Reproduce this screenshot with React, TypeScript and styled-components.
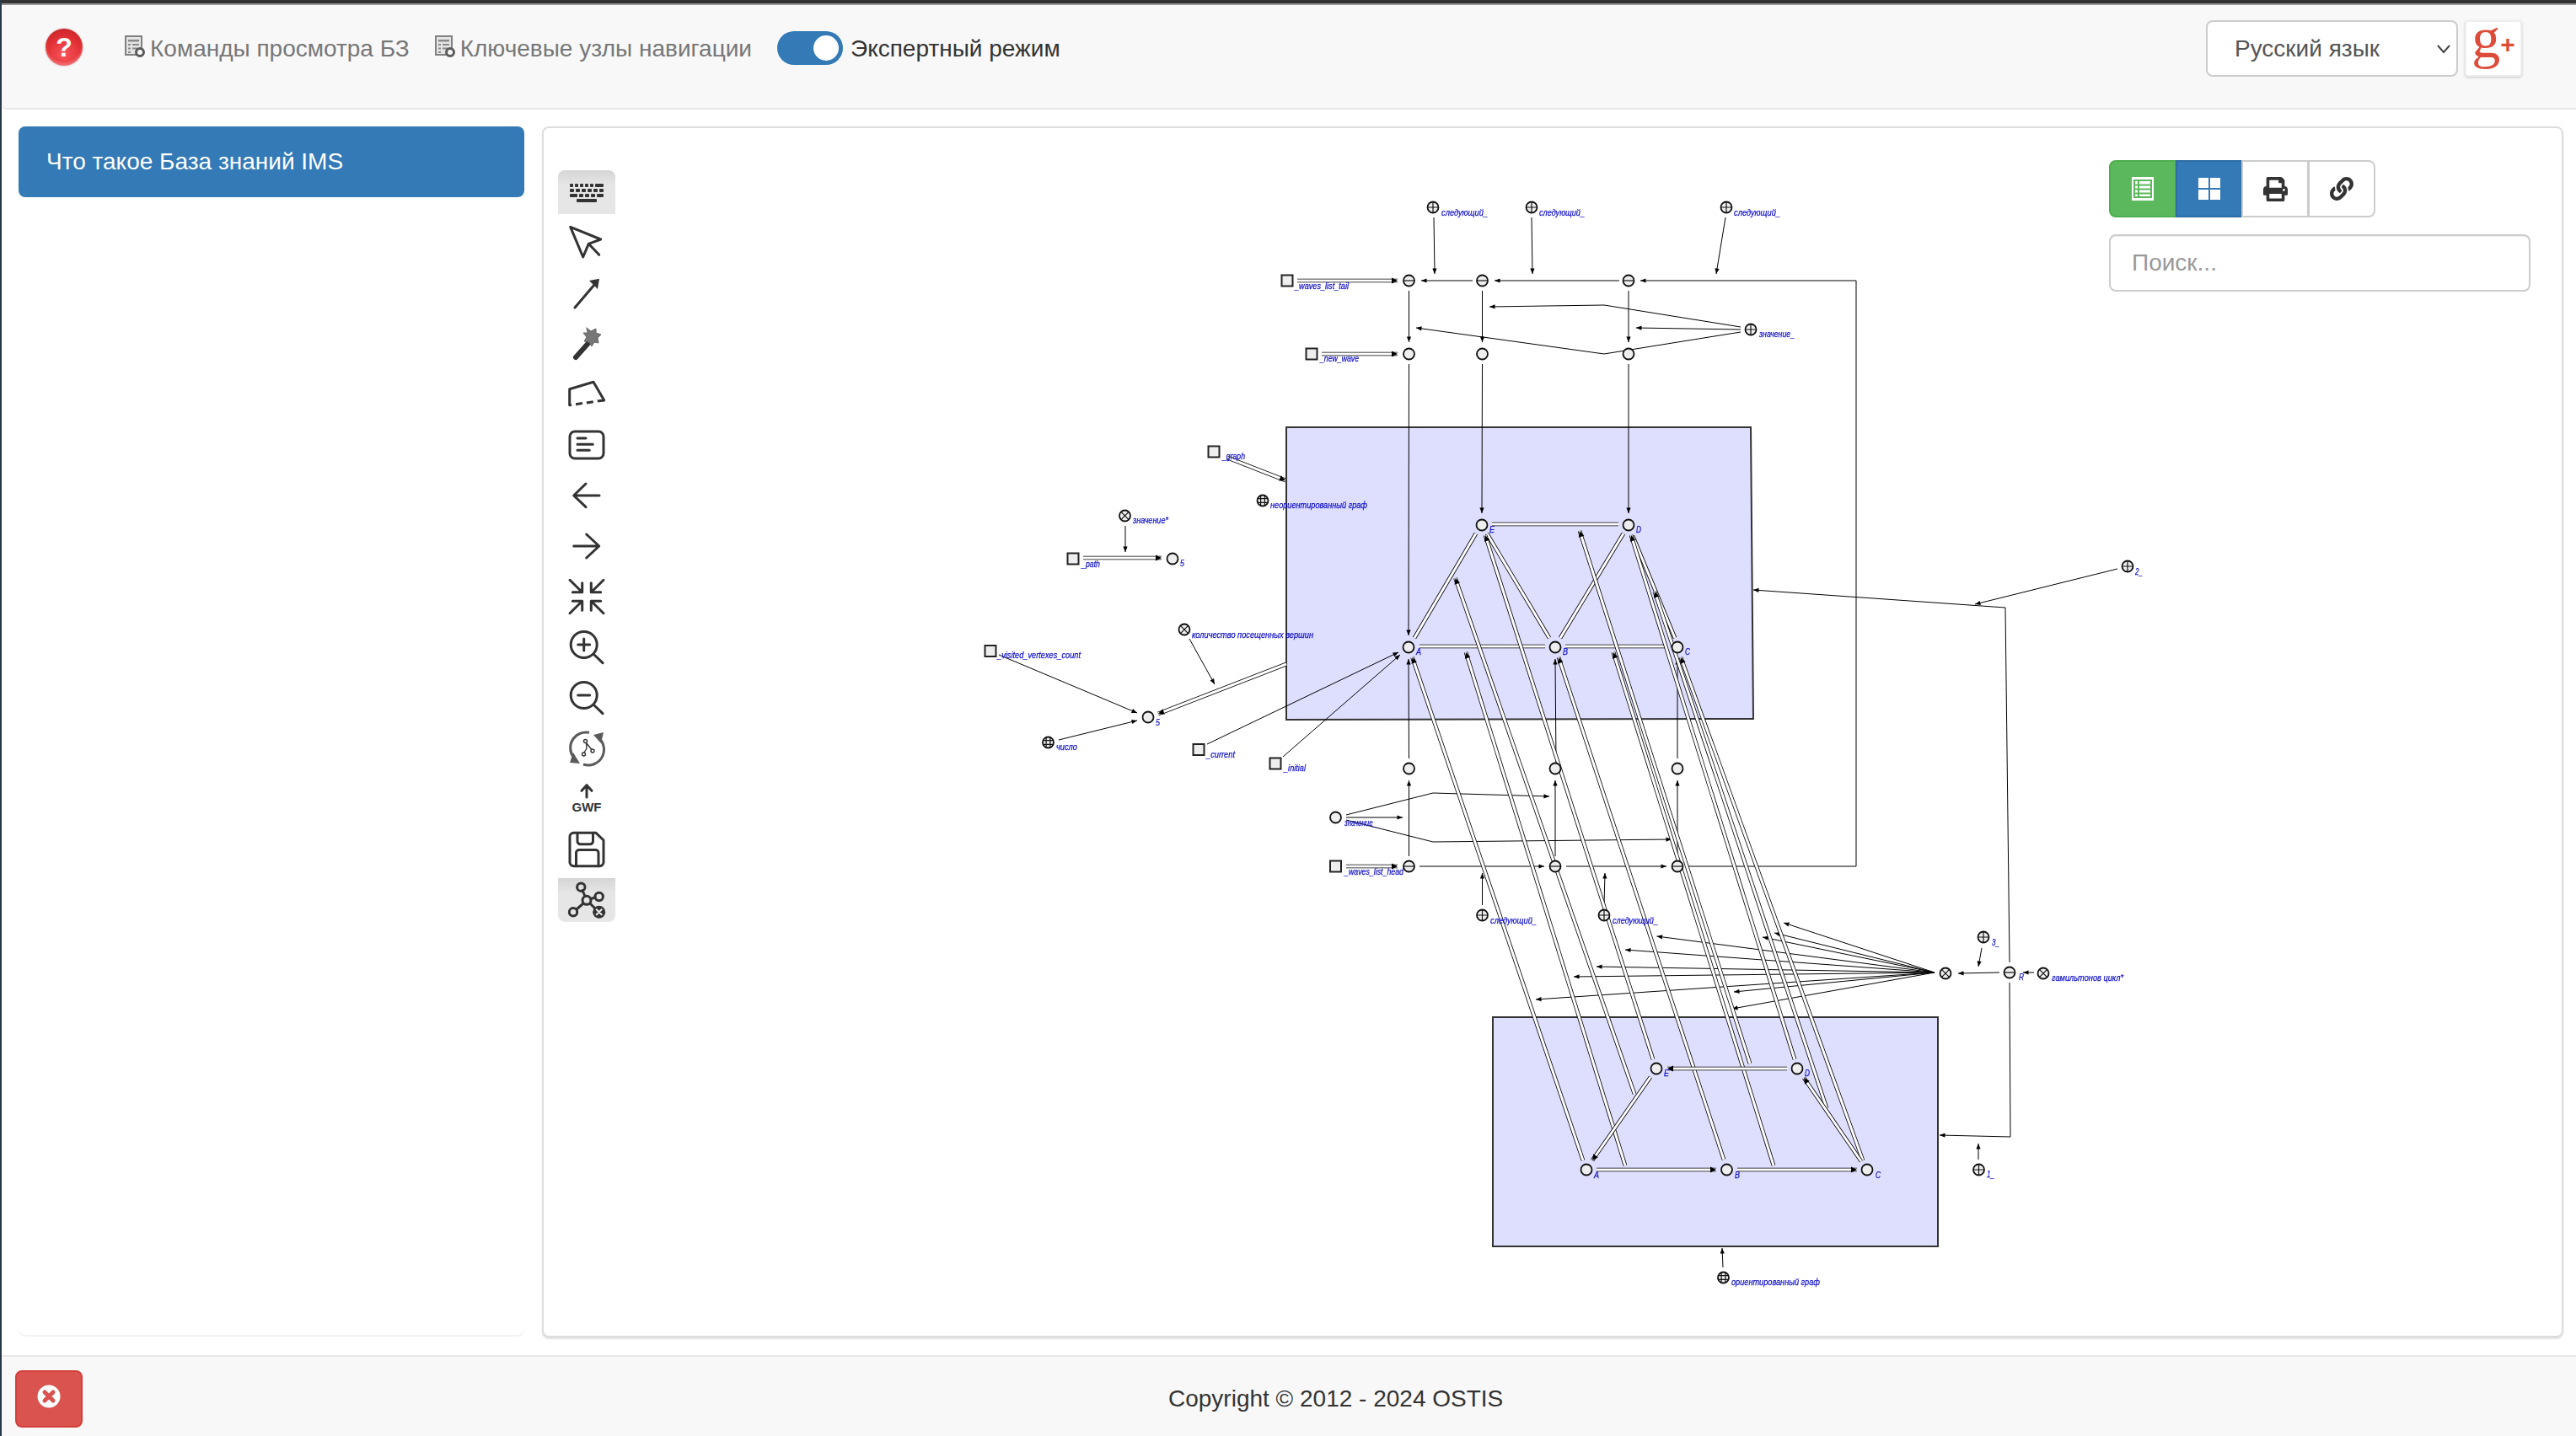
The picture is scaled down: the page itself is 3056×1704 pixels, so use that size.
import React from "react";
import styled, { createGlobalStyle } from "styled-components";
import { FaPrint, FaLink } from "react-icons/fa";

const Global = createGlobalStyle`
  html, body { margin: 0; padding: 0; background: #fff; }
  * { box-sizing: border-box; }
  body { font-family: "Liberation Sans", Arial, sans-serif; font-size: 28px; color: #333; }
`;

const Page = styled.div`
  width: 3056px; height: 1704px; display: flex; flex-direction: column;
  border-left: 2px solid #27384a; overflow: hidden;
`;
const TopStrip = styled.div`
  height: 6px; flex: none; background: #333; border-bottom: 2px solid #999;
`;
const Navbar = styled.nav`
  height: 124px; flex: none; display: flex; align-items: flex-start; padding: 18px 0 0 52px;
  background: #f8f8f8; border-bottom: 2px solid #e7e7e7; border-radius: 6px 0 0 6px;
`;
const NavRow = styled.div`
  height: 67px; flex: 1; display: flex; align-items: center;
`;
const Help = styled.div`
  width: 44px; height: 44px; border-radius: 50%; display: flex; align-items: center; justify-content: center;
  margin: -3px 50px 0 0; color: #fff; font-weight: 700; font-size: 32px; line-height: 1;
  background: radial-gradient(circle at 50% 70%, #f8555a 0%, #e23035 55%, #b81f22 100%);
  box-shadow: 0 0 2px rgba(120, 20, 20, .5), inset 0 -3px 3px rgba(255, 200, 200, .35);
`;
const NavLink = styled.a`
  display: flex; align-items: center; color: #777; margin-right: 30px; white-space: nowrap;
`;
const DocIcon = styled.svg`
  width: 24px; height: 26px; margin: -6px 6px 0 0; flex: none;
`;
const Toggle = styled.div`
  width: 78px; height: 40px; border-radius: 20px; background: #337ab7; display: flex; justify-content: flex-end;
  align-items: center; padding-right: 5px; margin: -1px 9px 0 0; flex: none;
`;
const Knob = styled.div`
  width: 30px; height: 30px; border-radius: 50%; background: #fff;
`;
const Expert = styled.span`
  color: #333; white-space: nowrap;
`;
const NavSpacer = styled.div`
  flex: 1;
`;
const SelectBox = styled.div`
  width: 299px; height: 67px; flex: none; background: #fff; border: 2px solid #ccc; border-radius: 8px; color: #555;
  display: flex; align-items: center; justify-content: space-between; padding: 0 6px 0 32px;
`;
const Chevron = styled.svg`
  width: 18px; height: 12px;
`;
const GooglePlus = styled.div`
  width: 68px; height: 67px; flex: none; margin: 0 64px 0 8px; background: #fff; border: 2px solid #eee; border-radius: 4px;
  box-shadow: 0 1px 3px rgba(0, 0, 0, .2); display: flex; align-items: center; justify-content: center; color: #dd4b39;
`;
const GLetter = styled.span`
  font-family: "Liberation Serif", serif; font-size: 68px; line-height: 50px; margin-top: -26px;
`;
const GPlus = styled.span`
  font-size: 30px; font-weight: 700; line-height: 1; margin: -10px 0 0 0;
`;

const Main = styled.main`
  flex: 1; display: flex; align-items: flex-start; padding: 20px 15px 0 20px; gap: 21px; min-height: 0;
`;
const Sidebar = styled.aside`
  width: 600px; height: 1434px; flex: none; border-radius: 8px; box-shadow: 0 2px 2px rgba(0, 0, 0, .06);
`;
const SidebarItem = styled.a`
  display: flex; align-items: center; height: 84px; padding: 0 33px; background: #337ab7; color: #fff; border-radius: 8px;
`;
const Panel = styled.section`
  width: 2398px; height: 1437px; flex: none; display: flex; background: #fff; border: 2px solid #ddd; border-radius: 8px;
  box-shadow: 0 2px 2px rgba(0, 0, 0, .12);
`;
const ToolColumn = styled.div`
  width: 68px; flex: none; margin: 50px 0 0 17px; display: flex; flex-direction: column; gap: 8px;
`;
const ToolButton = styled.div<{ $active?: "top" | "bottom" }>`
  width: 68px; height: 52px; display: flex; align-items: center; justify-content: center; color: #333;
  border-radius: ${p => (p.$active === "top" ? "8px 8px 0 0" : p.$active === "bottom" ? "0 0 8px 8px" : "0")};
  background: ${p => (p.$active ? "linear-gradient(#d5d5d5, #e6e6e6 35%)" : "transparent")};
`;
const ToolIcon = styled.svg`
  width: 44px; height: 44px; overflow: visible; flex: none;
  fill: none; stroke: #333; stroke-width: 3; stroke-linecap: round; stroke-linejoin: round;
`;
const GwfText = styled.text`
  font-family: "Liberation Sans", sans-serif; font-weight: 700; font-size: 15px; fill: #333; stroke: none; text-anchor: middle;
`;
const Canvas = styled.svg`
  width: 1772px; height: 1433px; flex: none; overflow: visible; filter: blur(.25px);
`;
const RightColumn = styled.div`
  width: 500px; flex: none; margin-top: 38px; display: flex; flex-direction: column; gap: 20px; position: relative;
`;
const ButtonGroup = styled.div`
  display: flex;
`;
const GroupButton = styled.div<{ $bg: string; $border: string; $w: number; $first?: boolean; $last?: boolean }>`
  width: ${p => p.$w}px; height: 68px; display: flex; align-items: center; justify-content: center;
  background: ${p => p.$bg}; border: 2px solid ${p => p.$border}; color: #333; margin-left: ${p => (p.$first ? 0 : -1)}px;
  border-radius: ${p => (p.$first ? "8px 0 0 8px" : p.$last ? "0 8px 8px 0" : "0")};
`;
const Search = styled.div`
  width: 500px; height: 68px; border: 2px solid #ccc; border-radius: 8px; color: #999; background: #fff;
  display: flex; align-items: center; padding-left: 25px; box-shadow: inset 0 1px 1px rgba(0, 0, 0, .075);
`;
const Footer = styled.footer`
  height: 96px; flex: none; display: flex; align-items: flex-start; padding: 16px 0 0 16px;
  background: #f8f8f8; border-top: 2px solid #e7e7e7;
`;
const CloseButton = styled.div`
  width: 80px; height: 68px; flex: none; display: flex; align-items: center; justify-content: center; padding-bottom: 6px;
  background: #d9534f; border: 2px solid #d43f3a; border-radius: 8px;
`;
const Copyright = styled.span`
  margin: 18px 0 0 1288px; color: #333; white-space: nowrap;
`;

/* graph parts */
const Contour = styled.polygon`
  fill: #dedeff; stroke: #333; stroke-width: 2;
`;
const Wire = styled.polyline<{ $w?: number; $c?: string }>`
  fill: none; stroke: ${p => p.$c || "#000"}; stroke-width: ${p => p.$w || 1}; stroke-linejoin: miter;
`;
const Head = styled.polygon`
  fill: #000;
`;
const NodeBody = styled.circle`
  fill: #eee; stroke: #111; stroke-width: 1.8;
`;
const NodeMark = styled.path`
  fill: none; stroke: #111; stroke-width: 1.2;
`;
const VarBody = styled.rect`
  fill: #eee; stroke: #222; stroke-width: 2;
`;
const Label = styled.text`
  font-family: "Liberation Sans", sans-serif; font-style: italic; font-size: 11px; fill: #1010c8;
  stroke: #1010c8; stroke-width: .25px;
`;

type P = [number, number];
type NodeKind = "plain" | "bar" | "plus" | "cross" | "grid";
const R = 6.5;

function ArrowHead({ a, b, len = 6.5, half = 2.6 }: { a: P; b: P; len?: number; half?: number }) {
  const dx = b[0] - a[0], dy = b[1] - a[1];
  const l = Math.hypot(dx, dy) || 1;
  const ux = dx / l, uy = dy / l;
  const bx = b[0] - ux * len, by = b[1] - uy * len;
  return <Head points={`${b[0]},${b[1]} ${bx - uy * half},${by + ux * half} ${bx + uy * half},${by - ux * half}`} />;
}

function Arc({ pts, head = true }: { pts: P[]; head?: boolean }) {
  return (
    <g>
      <Wire points={pts.map(p => p.join(",")).join(" ")} />
      {head && <ArrowHead a={pts[pts.length - 2]} b={pts[pts.length - 1]} />}
    </g>
  );
}

function DoubleArc({ a, b, head = true }: { a: P; b: P; head?: boolean }) {
  const pts = `${a[0]},${a[1]} ${b[0]},${b[1]}`;
  return (
    <g>
      <Wire points={pts} $w={4.6} />
      <Wire points={pts} $w={3} $c="#fff" />
      {head && <ArrowHead a={a} b={b} len={7} half={3.4} />}
    </g>
  );
}

function Node({ x, y, kind = "plain" }: { x: number; y: number; kind?: NodeKind }) {
  const r = R;
  let d = "";
  if (kind === "bar" || kind === "plus") d += `M${x - r} ${y}H${x + r}`;
  if (kind === "plus") d += `M${x} ${y - r}V${y + r}`;
  if (kind === "cross") {
    const k = r * 0.7;
    d = `M${x - k} ${y - k}L${x + k} ${y + k}M${x - k} ${y + k}L${x + k} ${y - k}`;
  }
  if (kind === "grid") {
    const k = 2.4, e = 5.9;
    d = `M${x - e} ${y - k}H${x + e}M${x - e} ${y + k}H${x + e}M${x - k} ${y - e}V${y + e}M${x + k} ${y - e}V${y + e}`;
  }
  return (
    <g>
      <NodeBody cx={x} cy={y} r={r} />
      {d && <NodeMark d={d} />}
    </g>
  );
}

const Txt = ({ x, y, w, t }: { x: number; y: number; w: number; t: string }) => (
  <Label x={x} y={y} textLength={w} lengthAdjust="spacingAndGlyphs">{t}</Label>
);

const nodes: { x: number; y: number; k?: NodeKind }[] = [
  { x: 1671.5, y: 333, k: "bar" }, { x: 1758.5, y: 333, k: "bar" }, { x: 1932, y: 333, k: "bar" },
  { x: 1671.5, y: 420 }, { x: 1758.5, y: 420 }, { x: 1932, y: 420 },
  { x: 1700, y: 246, k: "plus" }, { x: 1817, y: 246, k: "plus" }, { x: 2048, y: 246, k: "plus" },
  { x: 2077, y: 391, k: "plus" },
  { x: 1758, y: 623 }, { x: 1932, y: 623 }, { x: 1671, y: 768 }, { x: 1845, y: 768 }, { x: 1990, y: 768 },
  { x: 1671.5, y: 912 }, { x: 1845, y: 912 }, { x: 1990, y: 912 },
  { x: 1671.5, y: 1028, k: "bar" }, { x: 1845, y: 1028, k: "bar" }, { x: 1990, y: 1028, k: "bar" },
  { x: 1584.5, y: 970 },
  { x: 1758.5, y: 1086, k: "plus" }, { x: 1903, y: 1086, k: "plus" },
  { x: 1498, y: 594, k: "grid" }, { x: 1334.5, y: 612, k: "cross" }, { x: 1391, y: 663 },
  { x: 1405, y: 747, k: "cross" }, { x: 1362, y: 851 }, { x: 1243.5, y: 881, k: "grid" },
  { x: 1882, y: 1388 }, { x: 2048.5, y: 1388 }, { x: 2215, y: 1388 }, { x: 1965, y: 1268 }, { x: 2132, y: 1268 },
  { x: 2308, y: 1155, k: "cross" }, { x: 2384, y: 1154, k: "bar" }, { x: 2424, y: 1155, k: "cross" },
  { x: 2353, y: 1112, k: "plus" }, { x: 2347.5, y: 1388, k: "plus" }, { x: 2524, y: 672, k: "plus" },
  { x: 2044.5, y: 1516, k: "grid" },
];

const vars: P[] = [[1527, 333], [1556, 420], [1440, 536], [1273, 663], [1175, 772.5], [1422, 889.5], [1513, 906], [1584.5, 1028]];

const labels: { x: number; y: number; w: number; t: string }[] = [
  { x: 1710, y: 256, w: 55, t: "следующий_" }, { x: 1826, y: 256, w: 54, t: "следующий_" }, { x: 2057, y: 256, w: 55, t: "следующий_" },
  { x: 1536, y: 343, w: 64, t: "_waves_list_tail" }, { x: 1566, y: 429, w: 46, t: "_new_wave" },
  { x: 2087, y: 400, w: 42, t: "значение_" },
  { x: 1450, y: 545, w: 27, t: "_graph" }, { x: 1507, y: 603, w: 115, t: "неориентированный граф" },
  { x: 1344, y: 621, w: 42, t: "значение*" }, { x: 1283, y: 673, w: 22, t: "_path" }, { x: 1400, y: 672, w: 5, t: "5" },
  { x: 1414, y: 757, w: 144, t: "количество посещенных вершин" },
  { x: 1183, y: 781, w: 99, t: "_visited_vertexes_count" }, { x: 1371, y: 861, w: 5, t: "5" },
  { x: 1253, y: 890, w: 25, t: "число" }, { x: 1431, y: 899, w: 34, t: "_current" }, { x: 1523, y: 915, w: 26, t: "_initial" },
  { x: 1767, y: 632, w: 6, t: "E" }, { x: 1941, y: 632, w: 6, t: "D" }, { x: 1680, y: 777, w: 6, t: "A" },
  { x: 1854, y: 777, w: 6, t: "B" }, { x: 1999, y: 777, w: 6, t: "C" },
  { x: 1595, y: 980, w: 38, t: "значение_" }, { x: 1595, y: 1038, w: 70, t: "_waves_list_head" },
  { x: 1768, y: 1096, w: 55, t: "следующий_" }, { x: 1913, y: 1096, w: 54, t: "следующий_" },
  { x: 1891, y: 1398, w: 6, t: "A" }, { x: 2058, y: 1398, w: 6, t: "B" }, { x: 2225, y: 1398, w: 6, t: "C" },
  { x: 1974, y: 1277, w: 6, t: "E" }, { x: 2141, y: 1277, w: 6, t: "D" },
  { x: 2395, y: 1163, w: 6, t: "R" }, { x: 2434, y: 1164, w: 85, t: "гамильтонов цикл*" },
  { x: 2363, y: 1122, w: 9, t: "3_" }, { x: 2357, y: 1397, w: 9, t: "1_" }, { x: 2533, y: 682, w: 9, t: "2_" },
  { x: 2054, y: 1525, w: 105, t: "ориентированный граф" },
];

const singleArcs: P[][] = [
  [[1701, 258], [1702, 325]], [[1817, 258], [1818, 325]], [[2047, 258], [2036, 325]],
  [[1747, 333], [1686, 333]], [[1921, 333], [1773, 333]], [[2202, 333], [1946, 333]],
  [[1671.5, 345], [1671.5, 406]], [[1758.5, 345], [1758.5, 406]], [[1932, 345], [1932, 406]],
  [[1671.5, 432], [1671, 754]], [[1758.5, 432], [1758, 609]], [[1932, 432], [1932, 609]],
  [[2065, 388], [1903, 362], [1767, 364]], [[2065, 391], [1941, 389]], [[2065, 394], [1903, 420], [1680, 389]],
  [[1597, 967], [1700, 941], [1838, 945]], [[1597, 970], [1664, 970]], [[1597, 973], [1700, 999], [1983, 996]],
  [[1671.5, 1016], [1671.5, 926]], [[1845, 1016], [1845, 926]], [[1990, 1016], [1990, 926]],
  [[1671.5, 900], [1671, 782]], [[1846, 906], [1845, 782]], [[1990, 900], [1990, 782]],
  [[1684, 1028], [1832, 1028]], [[1858, 1028], [1977, 1028]],
  [[1758.5, 1074], [1758.5, 1036]], [[1903, 1074], [1904, 1036]],
  [[1335, 624], [1335, 655]], [[1411, 758], [1441, 812]], [[1185, 777], [1349, 846]], [[1256, 878], [1349, 855]],
  [[1432, 883], [1659, 774]], [[1522, 898], [1661, 777]],
  [[2413, 1154], [2400, 1154]], [[2372, 1154], [2323, 1155]], [[2351, 1125], [2347, 1147]], [[2347, 1376], [2347, 1357]],
  [[2512, 675], [2343, 717]],
  [[2384, 1142], [2379, 721], [2080, 700]], [[2384, 1166], [2385, 1349], [2301, 1347]],
  [[2044, 1504], [2043, 1481]],
];

const plainWires: P[][] = [[[2202, 333], [2202, 1028], [2002, 1028]]];

const fanTargets: P[] = [
  [2116, 1095], [2105, 1107], [2091, 1112], [1965.5, 1111], [1928, 1127], [1894, 1147], [1867, 1159], [1822, 1186], [2057, 1177], [2055, 1197],
];

const doubleEdges: { a: P; b: P; head?: boolean }[] = [
  { a: [1770, 622], b: [1920, 622], head: false }, { a: [1684, 767], b: [1833, 767], head: false }, { a: [1857, 767], b: [1978, 767], head: false },
  { a: [1751, 633], b: [1678, 757], head: false }, { a: [1764, 633], b: [1838, 757], head: false }, { a: [1926, 633], b: [1851, 757], head: false },
  { a: [1937, 636], b: [1987, 757], head: false },
  { a: [1539, 333], b: [1658, 333] }, { a: [1568, 420], b: [1658, 420] }, { a: [1456, 543], b: [1525, 570] },
  { a: [1285, 662], b: [1378, 662] }, { a: [1526, 788], b: [1374, 847] }, { a: [1597, 1028], b: [1658, 1028] },
];

const mappingEdges: [P, P][] = [
  [[1878, 1377], [1675.5, 780]], [[1928, 1383], [1739, 774]], [[1939, 1298], [1726.5, 686]], [[1961, 1257], [1762, 635]],
  [[2076, 1262], [1874, 630]], [[2045, 1376], [1849, 780]], [[2104, 1383], [1914, 774]], [[2129, 1257], [1935, 635]],
  [[2167, 1315], [1963, 702]], [[2210, 1377], [1994, 780]],
];

const lowerEdges: [P, P][] = [
  [[1894, 1388], [2036, 1388]], [[2061, 1388], [2203, 1388]], [[2120, 1268], [1978, 1268]], [[1958, 1278], [1889, 1377]], [[2208, 1378], [2140, 1279]],
];

function GraphCanvas() {
  return (
    <Canvas viewBox="730 152 1772 1433">
      <Contour points="1526,507 2077,507 2080,853 1526,854" />
      <Contour points="1771,1207 2299,1207 2299,1479 1771,1479" />
      {plainWires.map((w, i) => <Arc key={i} pts={w} head={false} />)}
      {singleArcs.map((w, i) => <Arc key={i} pts={w} />)}
      {fanTargets.map((t, i) => <Arc key={i} pts={[[2295, 1154], t]} />)}
      {doubleEdges.map((e, i) => <DoubleArc key={i} a={e.a} b={e.b} head={e.head} />)}
      {mappingEdges.map((e, i) => <DoubleArc key={i} a={e[0]} b={e[1]} />)}
      {lowerEdges.map((e, i) => <DoubleArc key={i} a={e[0]} b={e[1]} />)}
      {vars.map((v, i) => <VarBody key={i} x={v[0] - 6.5} y={v[1] - 6.5} width={13} height={13} />)}
      {nodes.map((n, i) => <Node key={i} x={n.x} y={n.y} kind={n.k} />)}
      {labels.map((l, i) => <Txt key={i} {...l} />)}
    </Canvas>
  );
}

const Filled = styled.g`
  fill: #333; stroke: none;
`;

function KeyboardIcon() {
  const row = (y: number, xs: [number, number][]) => xs.map(([x, w], i) => <rect key={`${y}-${i}`} x={x} y={y} width={w} height={4} rx={1} />);
  const five: [number, number][] = [[2, 5], [9, 5], [16, 5], [23, 5], [30, 5], [37, 5]];
  const top: [number, number][] = [[2, 4], [8, 4], [14, 4], [20, 4], [26, 4], [32, 10]];
  const mid: [number, number][] = [[2, 9], [13, 5], [20, 5], [27, 5], [34, 8]];
  return (
    <ToolIcon viewBox="0 0 44 44">
      <Filled>
        {row(12, top)}
        {row(18, five)}
        {row(24, mid)}
        <rect x={10} y={30} width={24} height={4} rx={1} />
      </Filled>
    </ToolIcon>
  );
}

function CollapseIcon() {
  return (
    <ToolIcon viewBox="0 0 44 44">
      <path d="M2 2.3L16.7 16.7M5.3 16.7H16.7V5.7" />
      <path d="M42 2.3L27.3 16.7M38.7 16.7H27.3V5.7" />
      <path d="M2 41.7L16.7 27.3M5.3 27.3H16.7V38.3" />
      <path d="M42 41.7L27.3 27.3M38.7 27.3H27.3V38.3" />
    </ToolIcon>
  );
}

const tools: { key: string; icon: React.ReactNode; active?: "top" | "bottom" }[] = [
  { key: "kb", active: "top", icon: <KeyboardIcon /> },
  { key: "pointer", icon: <ToolIcon viewBox="0 0 44 44"><path d="M2.7 3.3L38.7 18L24.3 23.3L17.7 39ZM24.3 23.3L36.7 36.3" /></ToolIcon> },
  { key: "pen", icon: <ToolIcon viewBox="0 0 44 44"><path d="M8 39L31 12" /><Filled><polygon points="37,4.7 25,7 35,17" /></Filled></ToolIcon> },
  {
    key: "wand",
    icon: (
      <ToolIcon viewBox="0 0 44 44">
        <path d="M9 38L25 20" strokeWidth={6} />
        <polygon points="22,3 27,7 33,4 33,9 39,11 35,15 36,21 31,20 28,25 25,20 19,19 22,14 18,9 23,9" fill="#777" stroke="#666" strokeWidth={1} />
      </ToolIcon>
    ),
  },
  {
    key: "contour",
    icon: (
      <ToolIcon viewBox="0 0 44 44" strokeWidth={2.5}>
        <path d="M1.7 34.7V15.7L30 7.3L42.7 29" />
        <path d="M42.7 29L1.7 34.7" strokeDasharray="8 5" strokeLinecap="butt" />
      </ToolIcon>
    ),
  },
  {
    key: "text",
    icon: (
      <ToolIcon viewBox="0 0 44 44" strokeWidth={2.5}>
        <rect x={2} y={6} width={40} height={32} rx={6} />
        <path d="M11 14H21M11 21.3H29.3M11 28.3H25.3" />
      </ToolIcon>
    ),
  },
  { key: "left", icon: <ToolIcon viewBox="0 0 44 44"><path d="M37 22H6.7M21 8L6.7 22L21 35.7" /></ToolIcon> },
  { key: "right", icon: <ToolIcon viewBox="0 0 44 44"><path d="M6.7 22H36.7M21.7 8L36.7 22L21.7 36" /></ToolIcon> },
  { key: "collapse", icon: <CollapseIcon /> },
  {
    key: "zoomin",
    icon: <ToolIcon viewBox="0 0 44 44" strokeWidth={3.4}><circle cx={18.7} cy={19} r={15.5} /><path d="M30.5 30.5L41 40.7M11.7 19H25.7M18.7 12V26" /></ToolIcon>,
  },
  {
    key: "zoomout",
    icon: <ToolIcon viewBox="0 0 44 44" strokeWidth={3.4}><circle cx={18.7} cy={19} r={15.5} /><path d="M30.5 30.5L41 40.7M11.7 19H25.7" /></ToolIcon>,
  },
  {
    key: "refresh",
    icon: (
      <ToolIcon viewBox="0 0 44 44" strokeWidth={3.2}>
        <path d="M25 3.3A18.5 18.5 0 0 0 6 32" stroke="#5a5a5a" strokeLinecap="butt" />
        <path d="M18 41A18.5 18.5 0 0 0 35.5 9" stroke="#5a5a5a" strokeLinecap="butt" />
        <polygon points="2,39 14,40 6,27" fill="#5a5a5a" stroke="none" />
        <polygon points="42,3 30,6 39,16" fill="#5a5a5a" stroke="none" />
        <g strokeWidth={1.4}>
          <circle cx={20.5} cy={13.5} r={2} />
          <circle cx={29} cy={25} r={2} />
          <circle cx={18.5} cy={29} r={2} />
          <path d="M21.5 15.5L27.7 23.3M21.5 15.5L22 22L19 27" />
        </g>
      </ToolIcon>
    ),
  },
  {
    key: "gwf",
    icon: (
      <ToolIcon viewBox="0 0 44 44" strokeWidth={1.8}>
        <path d="M22 5.7V20M16 12.3L22 5.7L28 12.3" />
        <GwfText x={22} y={37}>GWF</GwfText>
      </ToolIcon>
    ),
  },
  {
    key: "save",
    icon: (
      <ToolIcon viewBox="0 0 44 44">
        <path d="M7 2.3H33L42 11V37A4.5 4.5 0 0 1 37.500 41.700H6.500A4.500 4.500 0 0 1 2 37V7A4.500 4.500 0 0 1 7 2.300Z" />
        <path d="M11 2.3V12A3.500 3.500 0 0 0 14.500 15.700H26A3.500 3.500 0 0 0 29.500 12V2.300" />
        <path d="M9.500 41.700V26A3.500 3.500 0 0 1 13 22.500H32.500A3.500 3.500 0 0 1 36 26V41.700" />
      </ToolIcon>
    ),
  },
  {
    key: "graph",
    active: "bottom",
    icon: (
      <ToolIcon viewBox="0 0 44 44" strokeWidth={2.6}>
        <path d="M17 10.500L20 17.500M27 20.500L32 19M18 26L10 33M26 26L32 32" />
        <circle cx={22} cy={22.300} r={5} />
        <circle cx={15.300} cy={6.700} r={4.700} />
        <circle cx={36.700} cy={18} r={4.700} />
        <circle cx={6} cy={36.300} r={4.700} />
        <circle cx={36.700} cy={36.300} r={7.500} fill="#333" stroke="none" />
        <path d="M33.700 33.300L39.700 39.300M39.700 33.300L33.700 39.300" stroke="#eee" strokeWidth={2} />
      </ToolIcon>
    ),
  },
];

function DocGear() {
  return (
    <DocIcon viewBox="0 0 24 26">
      <rect x={1} y={1} width={19} height={22} fill="#e4e4e4" stroke="#808080" strokeWidth={2} />
      <path d="M4 5H17V7.500H4ZM4 10H7V12H4ZM9 10H17V12H9ZM4 14.500H7V16.500H4ZM9 14.500H15V16.500H9ZM4 19H7V21H4Z" fill="#8a8a8a" />
      <circle cx={18} cy={20} r={4.500} fill="#f8f8f8" stroke="#5a5a5a" strokeWidth={3} />
    </DocIcon>
  );
}

export default function App() {
  return (
    <>
      <Global />
      <Page>
        <TopStrip />
        <Navbar>
          <NavRow>
            <Help>?</Help>
            <NavLink><DocGear />Команды просмотра БЗ</NavLink>
            <NavLink><DocGear />Ключевые узлы навигации</NavLink>
            <Toggle><Knob /></Toggle>
            <Expert>Экспертный режим</Expert>
            <NavSpacer />
            <SelectBox>
              Русский язык
              <Chevron viewBox="0 0 18 12"><path d="M2 2L9 10L16 2" fill="none" stroke="#444" strokeWidth={2} /></Chevron>
            </SelectBox>
            <GooglePlus><GLetter>g</GLetter><GPlus>+</GPlus></GooglePlus>
          </NavRow>
        </Navbar>
        <Main>
          <Sidebar><SidebarItem>Что такое База знаний IMS</SidebarItem></Sidebar>
          <Panel>
            <ToolColumn>
              {tools.map(t => <ToolButton key={t.key} $active={t.active}>{t.icon}</ToolButton>)}
            </ToolColumn>
            <GraphCanvas />
            <RightColumn>
              <ButtonGroup>
                <GroupButton $first $w={80} $bg="#5cb85c" $border="#4cae4c">
                  <svg width="26" height="28" viewBox="0 0 26 28">
                    <rect width="26" height="28" fill="#fff" />
                    <path d="M3 4H23V24H3ZM3 9.500H23M3 14.500H23M3 19.500H23M8 4V24" fill="none" stroke="#5cb85c" strokeWidth="2" />
                  </svg>
                </GroupButton>
                <GroupButton $w={79} $bg="#337ab7" $border="#2e6da4">
                  <svg width="26" height="26" viewBox="0 0 26 26">
                    <path d="M0 0H12V12H0ZM14 0H26V12H14ZM0 14H12V26H0ZM14 14H26V26H14Z" fill="#fff" />
                  </svg>
                </GroupButton>
                <GroupButton $w={80} $bg="#fff" $border="#ccc"><FaPrint size={29} /></GroupButton>
                <GroupButton $last $w={80} $bg="#fff" $border="#ccc"><FaLink size={28} /></GroupButton>
              </ButtonGroup>
              <Search>Поиск...</Search>
            </RightColumn>
          </Panel>
        </Main>
        <Footer>
          <CloseButton>
            <svg width="28" height="28" viewBox="0 0 28 28">
              <circle cx="14" cy="14" r="13.500" fill="#fff" />
              <path d="M9 9L19 19M19 9L9 19" stroke="#d9534f" strokeWidth="5" strokeLinecap="round" />
            </svg>
          </CloseButton>
          <Copyright>Copyright © 2012 - 2024 OSTIS</Copyright>
        </Footer>
      </Page>
    </>
  );
}
